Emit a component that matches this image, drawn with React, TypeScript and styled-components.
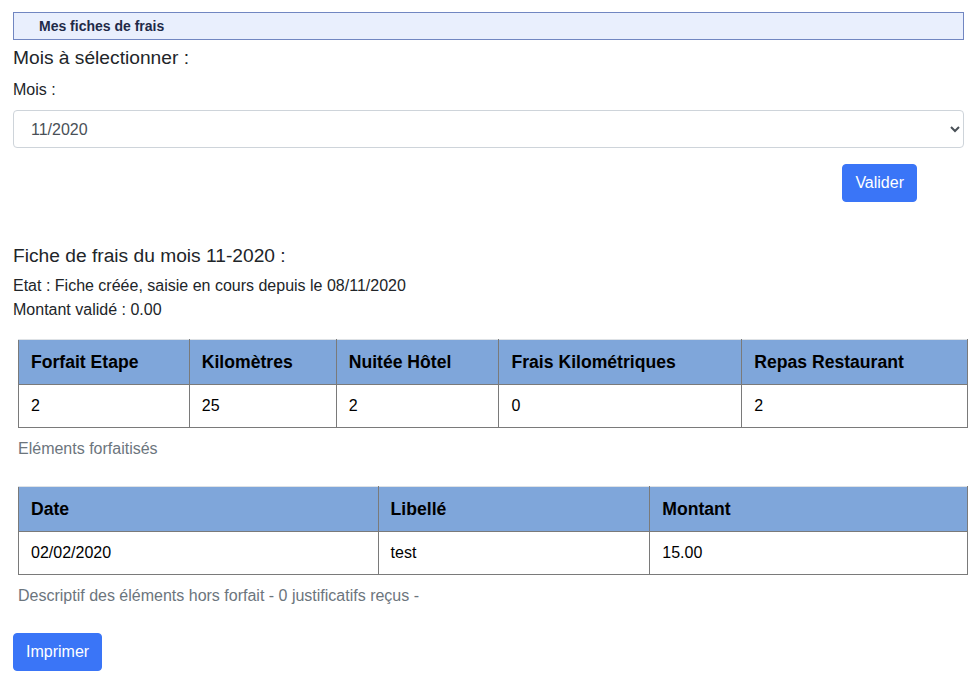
import React from "react";
import styled, { createGlobalStyle } from "styled-components";

const GlobalStyle = createGlobalStyle`
  html, body { margin: 0; padding: 0; background: #fff; }
  body {
    font-family: "Liberation Sans", Arial, sans-serif;
    font-size: 16px;
    line-height: 1.5;
    color: #212529;
  }
  * { box-sizing: border-box; }
`;

const Page = styled.div`
  padding: 12px 13px 14px 13px;
`;

const TitleBar = styled.div`
  height: 28px;
  display: flex;
  align-items: center;
  padding: 1px 0 0 25px;
  background: #e9effd;
  border: 1px solid #7186c1;
  font-size: 14px;
  font-weight: bold;
  color: #1f2a48;
`;

const SectionTitle = styled.h3<{ $top: number; $bottom: number }>`
  margin: ${(p) => p.$top}px 0 ${(p) => p.$bottom}px 0;
  font-size: 19.2px;
  font-weight: normal;
  line-height: 24px;
  color: #212529;
`;

const Label = styled.label`
  display: block;
  line-height: 24px;
  margin-bottom: 8px;
`;

const Select = styled.select`
  display: block;
  width: 100%;
  height: 38px;
  padding: 6px 8px 6px 13px;
  font-family: "Liberation Sans", Arial, sans-serif;
  font-size: 16px;
  color: #495057;
  background: #fff;
  border: 1px solid #ced4da;
  border-radius: 4px;
`;

const ButtonRow = styled.div<{ $end?: boolean }>`
  display: flex;
  justify-content: ${(p) => (p.$end ? "flex-end" : "flex-start")};
  padding-right: ${(p) => (p.$end ? "47px" : "0")};
`;

const Button = styled.button<{ $top: number }>`
  margin-top: ${(p) => p.$top}px;
  height: 38px;
  padding: 0 12px;
  font-family: "Liberation Sans", Arial, sans-serif;
  font-size: 16px;
  color: #fff;
  background: #3a75f7;
  border: 1px solid #3a75f7;
  border-radius: 4px;
`;

const Line = styled.div`
  line-height: 24px;
`;

const Table = styled.table<{ $top: number }>`
  width: 950px;
  margin: ${(p) => p.$top}px 0 0 5px;
  border-collapse: collapse;
  caption-side: bottom;
`;

const HeadCell = styled.th`
  height: 45px;
  padding: 0 12px;
  text-align: left;
  font-size: 17.6px;
  font-weight: bold;
  color: #000;
  background: #7fa6da;
  border-left: 1px solid #7a7a7a;
  border-right: 1px solid #7a7a7a;
  border-top: 1px solid #dee2e6;
  border-bottom: 1px solid #7a7a7a;
  vertical-align: middle;
`;

const Cell = styled.td`
  height: 43px;
  padding: 0 12px;
  text-align: left;
  font-size: 16px;
  color: #000;
  border: 1px solid #7a7a7a;
  vertical-align: middle;
`;

const Caption = styled.caption`
  text-align: left;
  padding: 9px 0 7px 0;
  line-height: 24px;
  color: #6c757d;
`;

type Col = { label: string; width: number; value: string };

const forfait: Col[] = [
  { label: "Forfait Etape", width: 171, value: "2" },
  { label: "Kilomètres", width: 147, value: "25" },
  { label: "Nuitée Hôtel", width: 163, value: "2" },
  { label: "Frais Kilométriques", width: 243, value: "0" },
  { label: "Repas Restaurant", width: 226, value: "2" },
];

const horsForfait: Col[] = [
  { label: "Date", width: 360, value: "02/02/2020" },
  { label: "Libellé", width: 272, value: "test" },
  { label: "Montant", width: 318, value: "15.00" },
];

function DataTable({ cols, caption, top }: { cols: Col[]; caption: string; top: number }) {
  return (
    <Table $top={top}>
      <colgroup>
        {cols.map((c) => (
          <col key={c.label} style={{ width: c.width }} />
        ))}
      </colgroup>
      <thead>
        <tr>
          {cols.map((c) => (
            <HeadCell key={c.label}>{c.label}</HeadCell>
          ))}
        </tr>
      </thead>
      <tbody>
        <tr>
          {cols.map((c) => (
            <Cell key={c.label}>{c.value}</Cell>
          ))}
        </tr>
      </tbody>
      <Caption>{caption}</Caption>
    </Table>
  );
}

export default function App() {
  return (
    <>
      <GlobalStyle />
      <Page>
        <TitleBar>Mes fiches de frais</TitleBar>
        <SectionTitle $top={6} $bottom={8}>Mois à sélectionner :</SectionTitle>
        <Label htmlFor="mois">Mois :</Label>
        <Select id="mois" defaultValue="11/2020">
          <option value="11/2020">11/2020</option>
          <option value="10/2020">10/2020</option>
        </Select>
        <ButtonRow $end>
          <Button $top={16}>Valider</Button>
        </ButtonRow>
        <SectionTitle $top={42} $bottom={6}>Fiche de frais du mois 11-2020 :</SectionTitle>
        <Line>Etat : Fiche créée, saisie en cours depuis le 08/11/2020</Line>
        <Line>Montant validé : 0.00</Line>
        <DataTable cols={forfait} caption="Eléments forfaitisés" top={17} />
        <DataTable cols={horsForfait} caption="Descriptif des éléments hors forfait - 0 justificatifs reçus -" top={18} />
        <ButtonRow>
          <Button $top={18}>Imprimer</Button>
        </ButtonRow>
      </Page>
    </>
  );
}
